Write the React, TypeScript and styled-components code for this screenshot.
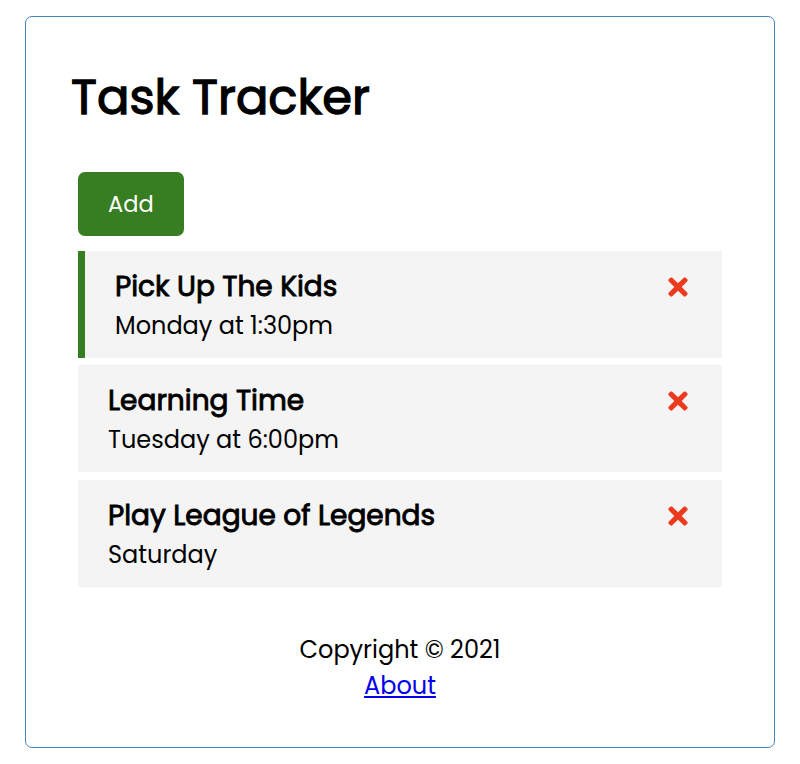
import React from 'react';
import styled, { createGlobalStyle } from 'styled-components';
import { FaTimes } from 'react-icons/fa';

type Task = {
  id: number;
  text: string;
  day: string;
  reminder: boolean;
};

const TASKS: Task[] = [
  { id: 1, text: 'Pick Up The Kids', day: 'Monday at 1:30pm', reminder: true },
  { id: 2, text: 'Learning Time', day: 'Tuesday at 6:00pm', reminder: false },
  { id: 3, text: 'Play League of Legends', day: 'Saturday', reminder: false },
];

const App: React.FC = () => {
  return (
    <>
      <GlobalStyle />
      <Container>
        <Header>
          <Title>Task Tracker</Title>
        </Header>
        <AddButton>Add</AddButton>
        {TASKS.map((task) => (
          <TaskItem key={task.id} $reminder={task.reminder}>
            <TaskTitle>
              {task.text}
              <FaTimes style={{ color: '#ec3a1e', cursor: 'pointer' }} />
            </TaskTitle>
            <TaskDay>{task.day}</TaskDay>
          </TaskItem>
        ))}
        <Footer>
          <FooterText>Copyright &copy; 2021</FooterText>
          <FooterLink href="#about">About</FooterLink>
        </Footer>
      </Container>
    </>
  );
};

const GlobalStyle = createGlobalStyle`
  * {
    box-sizing: border-box;
    margin: 0;
    padding: 0;
  }

  body {
    font-family: 'Poppins', 'Open Sans', sans-serif;
    background: #fff;
    color: #000;
  }
`;

const Container = styled.div`
  max-width: 750px;
  margin: 16px auto 0;
  border: 1px solid steelblue;
  border-radius: 7px;
  padding: 45px 45px 43px;
`;

const Header = styled.header`
  display: flex;
  align-items: center;
  justify-content: space-between;
  margin-bottom: 30px;
`;

// only the regular weight is used, headings get a slightly heavier stroke
const Title = styled.h1`
  font-size: 48px;
  line-height: 72px;
  font-weight: 400;
  -webkit-text-stroke: 1.3px currentColor;
`;

const AddButton = styled.button`
  display: inline-block;
  background: #377d22;
  color: #fff;
  border: none;
  padding: 15px 30px;
  margin: 7.5px 7px;
  border-radius: 7px;
  cursor: pointer;
  font-family: inherit;
  font-size: 22.5px;
  line-height: 34px;
`;

const TaskItem = styled.div<{ $reminder: boolean }>`
  background: #f4f4f4;
  margin: 7.5px 7px;
  padding: 15px 30px;
  cursor: pointer;
  border-left: ${({ $reminder }) => ($reminder ? '7px solid #377d22' : 'none')};
`;

const TaskTitle = styled.h3`
  display: flex;
  align-items: center;
  justify-content: space-between;
  font-size: 28px;
  line-height: 42px;
  font-weight: 400;
  -webkit-text-stroke: 0.9px currentColor;

  svg {
    -webkit-text-stroke: 0;
  }
`;

const TaskDay = styled.p`
  font-size: 24px;
  line-height: 35px;
`;

const Footer = styled.footer`
  margin-top: 45.5px;
  text-align: center;
`;

const FooterText = styled.p`
  font-size: 24px;
  line-height: 36px;
`;

const FooterLink = styled.a`
  font-size: 24px;
  line-height: 36px;
  color: #0000ee;
`;

export default App;
